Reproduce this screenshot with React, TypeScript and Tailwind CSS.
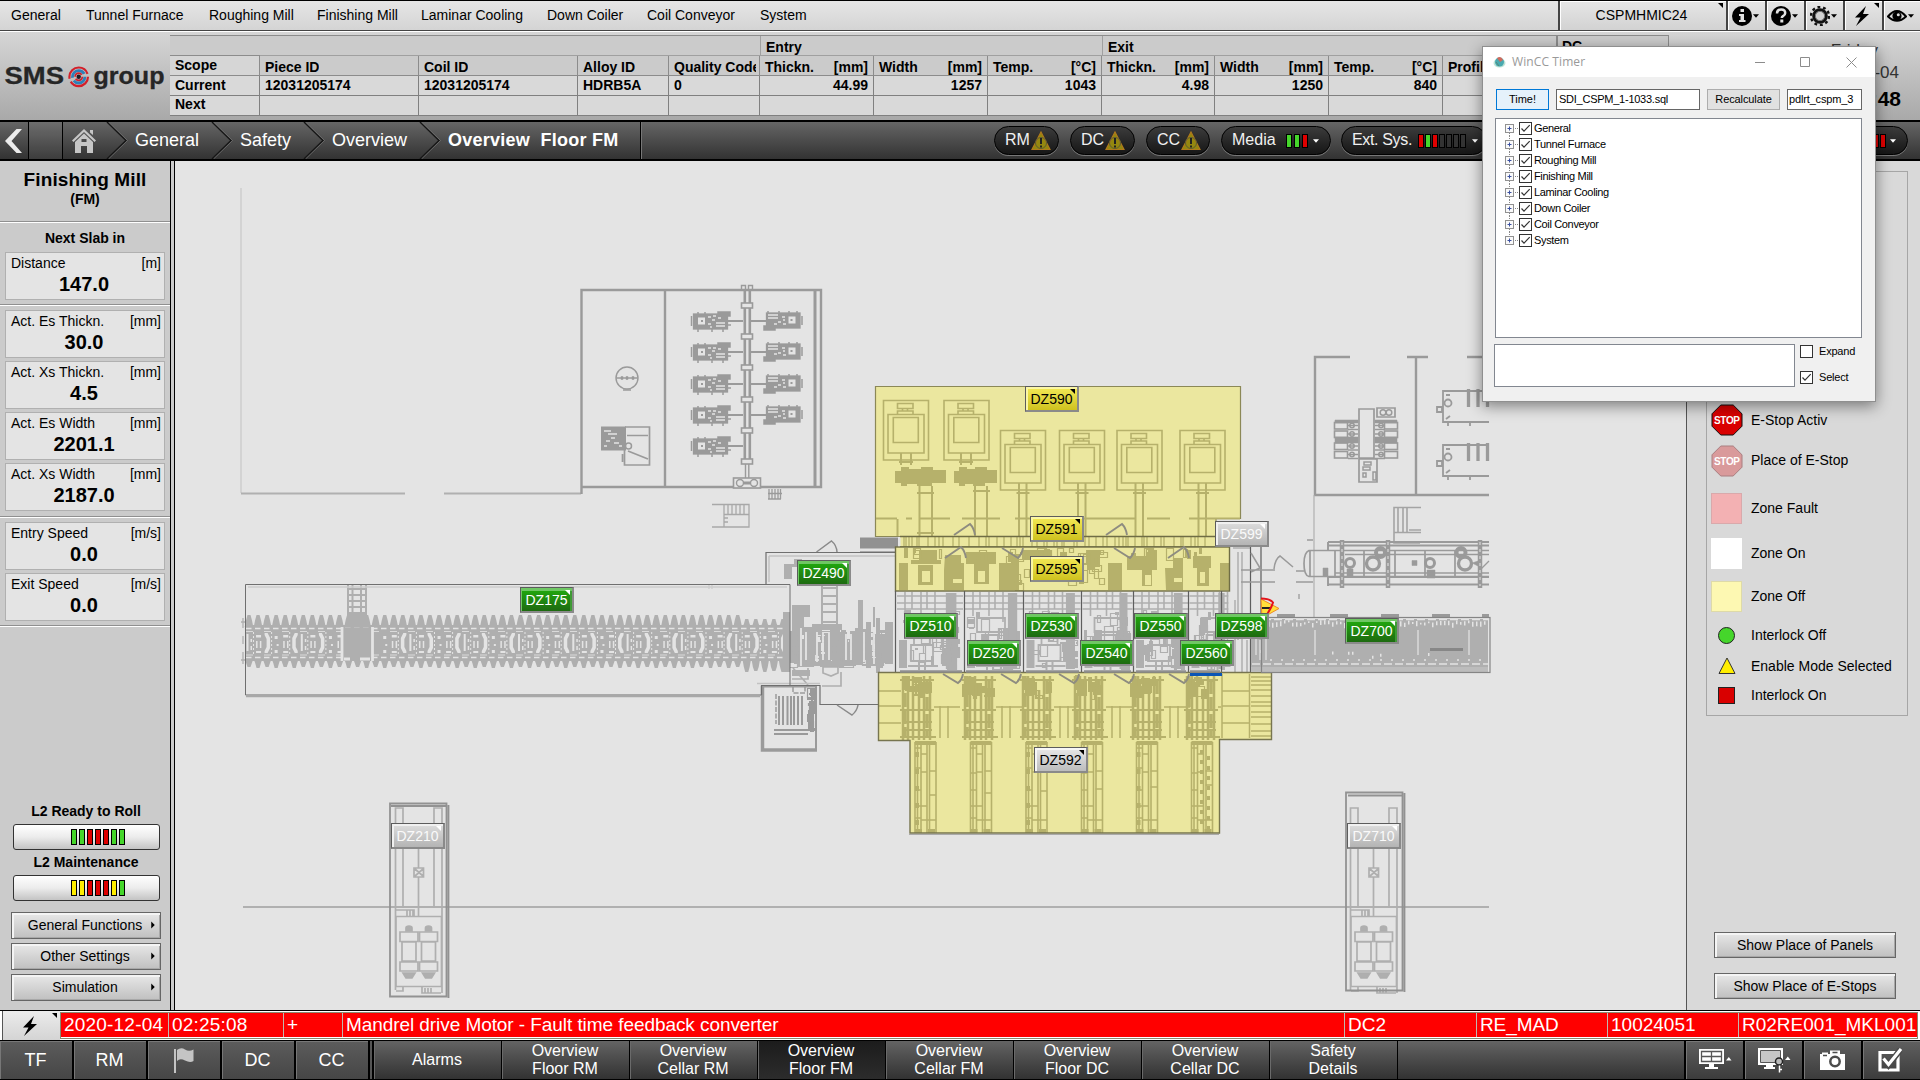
import React from "react";

/* ---------- drawing helpers ---------- */

function makeRng(seed: number) {
  let s = seed;
  return () => {
    s = (s * 16807) % 2147483647;
    return s / 2147483647;
  };
}

const box = (x: number, y: number, w: number, h: number) => `M${x} ${y}h${w}v${h}h${-w}z`;

type ClutterProps = {
  x: number; y: number; w: number; h: number; n: number; seed: number; color: string;
  max?: number; solid?: number; sw?: number;
};

/* Dense machine detail: small outlined and solid boxes inside a region. */
function Clutter({ x, y, w, h, n, seed, color, max = 12, solid = 0.4, sw = 1.2 }: ClutterProps) {
  const r = makeRng(seed * 7919 + 13);
  let open = "";
  let full = "";
  for (let i = 0; i < n; i++) {
    const bw = Math.min(w, 2 + Math.round(r() * max * 0.6));
    const bh = Math.min(h, 2 + Math.round(r() * max));
    const bx = x + Math.round(r() * (w - bw));
    const by = y + Math.round(r() * (h - bh));
    if (r() < solid) full += box(bx, by, bw, bh);
    else open += box(bx + 0.5, by + 0.5, bw, bh);
  }
  return (
    <g>
      <path d={full} fill={color} />
      <path d={open} fill="none" stroke={color} strokeWidth={sw} />
    </g>
  );
}

const G = "#9a9a9a";
const L = "#afafaf";
const BG = "#e4e4e4";
const YD = "#b6b16b";
const YL = "#ebe79f";

function Building() {
  const flanges = [303, 334, 365, 397, 428, 459];
  const left = [321, 352, 384, 415, 446];
  const right = [320, 351, 383, 414];
  return (
    <g fill="none" stroke={G}>
      <path d="M241 188V493" stroke="#c8c8c8" strokeWidth="1.2" />
      <path d="M241 493.5H405M444 493.5H581" stroke="#b0b0b0" strokeWidth="1.8" />
      <path d="M581.5 494V290H821V487H581.5M665 290V487" strokeWidth="2.400" />
      <path d="M815 290V487" strokeWidth="3" />
      <path d="M744.8 290V464M749.8 290V464" strokeWidth="2.6" />
      <path d="M745.5 464V480M748.8 464V480M741.5 290V285.500H745.500V290M748.500 290V285.500H752.500V290" strokeWidth="1.4" />
      {flanges.map((y) => (
        <rect key={y} x="741.5" y={y} width="11" height="5" fill={BG} strokeWidth="1.6" />
      ))}
      {left.map((y, i) => (
        <g key={y}>
          <path d={`M727 ${y}H743`} strokeWidth="2" />
          <rect x="693.500" y={y - 7} width="34" height="15" fill={G} strokeWidth="1.300" />
          <path d={`M718 ${y - 9}h12v4h-12zM691.500 ${y - 5}v10M698 ${y - 9}v3M705 ${y - 9}v3M698 ${y + 8}v3M712 ${y + 8}v3M723 ${y + 8}v3M727 ${y + 4}h4`} fill={G} strokeWidth="1.500" />
          <rect x="697.500" y={y - 4} width="8" height="8" fill={BG} strokeWidth="1" />
          <rect x="701" y={y - 1} width="2" height="2" fill={G} stroke="none" />
          <path d={`M708 ${y - 4}h3M712 ${y - 1}h3M708 ${y + 3}h3M716 ${y + 2}h9M716 ${y + 5}h9M718 ${y - 3}h3M711 ${y + 5}v2M713 ${y - 5 + i % 2}h3`} stroke={BG} strokeWidth="1.400" />
        </g>
      ))}
      {right.map((y, i) => (
        <g key={y}>
          <path d={`M751 ${y + 1}H767`} strokeWidth="2" />
          <rect x="766.500" y={y - 7} width="33.500" height="15" fill={G} strokeWidth="1.300" />
          <path d={`M764 ${y + 6}h11v4h-11zM802 ${y - 4}v9M768 ${y - 9}v3M779 ${y - 9}v3M789 ${y - 9}v3M797 ${y - 9}v3`} fill={G} strokeWidth="1.500" />
          <rect x="788" y={y - 4} width="8" height="8" fill={BG} strokeWidth="1" />
          <rect x="790.500" y={y - 1} width="2" height="2" fill={G} stroke="none" />
          <path d={`M768 ${y - 5}h10M768 ${y - 2}h10M778 ${y + 2}h3M783 ${y + 4}h3M782 ${y - 3}h3M774 ${y + 4 - i % 2}h3M783 ${y}h2`} stroke={BG} strokeWidth="1.400" />
        </g>
      ))}
      <circle cx="627" cy="378" r="11" strokeWidth="1.400" />
      <path d="M616 378H638M623 390h8" strokeWidth="1.600" />
      <path d="M621 376.500h2v3h-2zM626 376.500h2v3h-2zM632 376.500h2v3h-2z" fill={G} strokeWidth="0.500" />
      <rect x="601.500" y="427" width="24" height="23" fill={G} strokeWidth="1" />
      <path d="M604 431h7M608 434h9M606 441h4M614 443h5M604 446h3M611 438h4M619 446h3" stroke={BG} strokeWidth="1.700" />
      <path d="M625 427h24.500v38h-25v-15M627 435.500h21M628 451l20 8M622.500 454v8" strokeWidth="1.700" />
      <circle cx="628.500" cy="446" r="3" strokeWidth="1.500" />
      <rect x="733.500" y="478" width="27" height="10" fill={BG} strokeWidth="1.600" />
      <circle cx="740" cy="483" r="3.500" strokeWidth="1.400" />
      <circle cx="754" cy="483" r="3.500" strokeWidth="1.400" />
      <path d="M744 483h6" strokeWidth="3" />
      <path d="M769 489v10M772 489v10M775 489v10M778 489v10M780.500 489v10M768 493.500h14M768 499h13" strokeWidth="1.300" />
      <path d="M712 504.500H749V527H712M724 514.500H749M724 505V527M728 505V514M732 505V514M736 505V514M740 505V514M744 505V514M724 518h4M724 522h4" stroke="#a8a8a8" strokeWidth="1.300" />
    </g>
  );
}

function Conveyor() {
  let teeth = "";
  let holes = "";
  let dots = "";
  for (let i = 0; i < 60; i++) {
    const x = 245.5 + i * 9.05;
    const t = i > 54 ? 619 : 615;
    const b = i > 54 ? 671 : 667;
    teeth += `M${x - 0.8} 627L${x + 0.6} ${t + 5}L${x + 2} ${t}H${x + 5}L${x + 6.400} ${t + 5}L${x + 7.800} 627z`;
    teeth += `M${x - 0.8} 659L${x + 0.6} ${b - 4}L${x + 2} ${b + (i % 2)}H${x + 5}L${x + 6.400} ${b - 4}L${x + 7.800} 659z`;
    if (x > 338 && x < 374) continue;
    const k = i % 6;
    if (k === 0) holes += box(x + 1, 634, 2, 17) + box(x + 5, 639, 1.500, 3) + box(x + 5, 646, 1.500, 4);
    if (k === 1 || k === 4) holes += box(x + 1.5, 635, 5, 2.5) + box(x + 1.5, 641, 1.500, 7) + box(x + 5.3, 641, 1.500, 7) + box(x + 1.5, 651, 5, 2);
    if (k === 2) holes += `M${x + 1} 633h3l2.500 5v10l-2.500 5h-3v-2l2-4v-8l-2-4z`;
    if (k === 3) holes += box(x + 2, 636, 3, 3) + box(x + 4, 644, 2, 2) + box(x + 2, 650, 3, 3);
    if (k === 5) holes += `M${x + 7} 633h-3l-2.500 5v10l2.500 5h3v-2l-2-4v-8l2-4z`;
    if (i % 2 === 0) dots += `M${x + 8} 632V655`;
  }
  return (
    <g>
      <path d={teeth} fill={L} />
      <rect x="245" y="625" width="545" height="36" fill={L} />
      <path d={holes} fill={BG} />
      <path d={dots} stroke={BG} strokeWidth="1" strokeDasharray="2 2" />
      <path d="M246 628.500H790M246 657.500H790" stroke={BG} strokeWidth="1.500" strokeDasharray="5.500 3.500" />
      <path d="M246 631.500H790M246 655H790" stroke={BG} strokeWidth="0.800" strokeDasharray="7 11" />
      <path d="M243 618v10M243 636v8M243 652v12M241 622h5M241 660h5" stroke={L} strokeWidth="1.300" />
      <rect x="343" y="628" width="28" height="32" fill={L} />
      <path d="M342 627V661M372.500 627V661M344 659h6M360 659h10" stroke={BG} strokeWidth="2.800" />
      <path d="M348 585V626M352.500 585V626M361 585V626M366 585V626M348 589h18M348 595h18M348 601h18M348 607h18M348 613h18M348 619h18" stroke={L} strokeWidth="2" fill="none" />
      <rect x="349" y="614" width="17" height="12" fill={L} />
      <path d="M248 587H787M709 585v4M712 585v4" stroke="#cccccc" strokeWidth="1.300" fill="none" />
    </g>
  );
}

function RougherArea() {
  return (
    <g>
      <Clutter x={780} y={628} w={115} h={40} n={90} seed={4} color={L} max={22} solid={0.5} />
      <g fill={L}>
        <path d="M792 605h18v12h-6v10h18v8h-30zM792 670h18v6h-18zM783 612h7v60h-7zM858 600h5v30h-5zM873 607h2v20h-2z" />
        <path d="M784 564h10v-5h8v8h-10v12h-8zM812 624h30v6h-30zM812 661h30v5h-30z" />
        <path d="M855 628h7v36h-7zM866 622h5v46h-5zM876 618h4v55h-4zM885 622h8v42h-8z" />
      </g>
      <path d="M821 588h17M821 596h17M821 604h17M821 612h17M821 622h17M822 586V624M837 586V624" stroke={L} strokeWidth="2" />
      <path d="M823 667h15v6l-7 3l-8-3zM841 672V686H822M793 668l15 17M808 668V679H792" stroke={L} strokeWidth="1.700" fill="none" />
      <path d="M801 628V666M806 632V660M817 632V662M823 632V660M829 632V660M846 634V660M851 634V660M864 632V662M874 630V664" stroke={BG} strokeWidth="1.800" />
      <path d="M769 556H895M769 556V582M757 683.500H820" stroke="#c2c2c2" strokeWidth="1.500" fill="none" />
      <path d="M762.500 686V750H817" fill="none" stroke={G} strokeWidth="3.500" />
      <path d="M762 686.500H816V750" fill="none" stroke={G} strokeWidth="2" />
      <path d="M779 696V725M783 696V725M787.500 696V725M791 696V725M794 696V725M798 696V725M802 696V725" stroke={G} strokeWidth="2" />
      <path d="M774 730H808M774 734H808" stroke={G} strokeWidth="2" />
      <Clutter x={807} y={688} w={9} h={44} n={30} seed={9} color={G} solid={0.9} max={9} />
      <path d="M776 694v30M793 687v6h12v-6" stroke={G} strokeWidth="1.500" strokeDasharray="5 1.500" fill="none" />
      <g fill="none" stroke="#6f6f6f" strokeWidth="1.500">
        <path d="M245.500 584.500H790M790 584.500V685.500M761.500 695H245.500V584.500" strokeWidth="1" />
        <path d="M246 696.500H760" stroke="#a8a8a8" />
        <path d="M790 584.500H766V552.500H895.500M761.500 695V685.500H820V704.500H878" strokeWidth="1.200" />
        <path d="M816.500 552l15-11q5 4 5.500 11M837 705l15 10q5-4 6-10" stroke="#8a8a8a" />
      </g>
      <rect x="860" y="537.500" width="38" height="11" fill="#919191" />
      <path d="M860 551.500H895" stroke="#aaa" />
    </g>
  );
}

function MotorRoom() {
  const big = [883.5, 944];
  const small = [1000.5, 1059.5, 1117, 1180];
  const motor = (x: number, y: number) => (
    <path
      key={x}
      d={box(x, y, 45, 59.5) + box(x + 4.5, y + 14, 36, 38.5) + box(x + 9.800, y + 17, 25, 25) + box(x + 14, y + 3, 15.500, 5) + box(x + 14, y + 10.500, 15.500, 3.500) + `M${x + 19} ${y + 8}v3M${x + 24} ${y + 8}v3`}
    />
  );
  const ribs: number[] = [];
  const r = makeRng(77);
  for (let x = 904; x < 1214; x += 2 + Math.round(r() * 8)) ribs.push(x);
  return (
    <g>
      <path d="M875.500 386.500H1240.500V518.500H1216V536.500H875.500z" fill={YL} stroke="#8b8857" strokeWidth="1.200" />
      <path d="M876 518.500H897M906 518.500H912M920 518.500H950M962 518.500H1000M1015 518.500H1136M1147 518.500H1170M1189 518.500H1240M897.500 519V536" stroke={YD} strokeWidth="2" />
      <g fill="none" stroke={YD} strokeWidth="1.600">
        {big.map((x) => motor(x, 400.5))}
        {small.map((x) => motor(x, 430.5))}
        {small.map((x) => (
          <path key={x} d={`M${x + 18.500} 483V536M${x + 26} 483V536M${x + 16} 493h13`} strokeWidth="2" />
        ))}
        <path d="M901 453v12M911 453v12M899 462h14M961 453v12M971 453v12M959 462h14" strokeWidth="2" />
        <path d="M919.500 486V536M932 486V536M975 486V536M987 486V536M917 493h17M973 491h17M917 533h17" strokeWidth="2" />
      </g>
      <path d="M895 471h6v-4h8v2h12v-2h12v3h13v13h-14v3h-15v-2h-10v2h-6v-3h-6zM954 471h5v-4h8v2h8v-2h12v3h10v13h-12v3h-12v-2h-8v2h-6v-3h-5z" fill={YD} />
      <rect x="900.500" y="536.500" width="329" height="10.500" fill={YL} />
      <path d={ribs.map((x) => `M${x} 537V547`).join("")} stroke={YD} strokeWidth="1.300" />
      <path d="M900 536.500H1216M900 547H1230" stroke="#6f6d45" strokeWidth="1.300" />
      <rect x="895.500" y="547" width="334" height="44" fill={YL} />
      <g fill={YD}>
        <path d="M899 563h9v27h-9zM911 560h8v-10h18v10h4v4h-30zM918 565h15v20h-15zM945 555h16v8h3v27h-20v-20zM966 552h30v12h-30zM974 564h15v20h-15zM999 563h12v-8h8v35h-20z" />
        <path d="M1022 550h28v10h-28zM1086 550h14v17h-5v3h-8v-6zM1108 563h14v27h-14zM1127 556h30v14h-30zM1142 570h10v16h-10zM1165 568h8v-10h10v32h-17zM1193 556h18v12h-18zM1197 566h12v20h-12zM1220 563h9v27h-9z" />
      </g>
      <path d="M922 571h8v11h-8zM978 571h7v11h-7zM1145 575h6v10h-6zM1200 572h5v11h-5zM953 579h9v4h-9zM1174 578h8v4h-8z" fill={YL} />
      <Clutter x={1005} y={550} w={100} h={40} n={34} seed={12} color={YD} solid={0.1} />
      <Clutter x={897} y={548} w={330} h={12} n={30} seed={15} color={YD} solid={0.5} />
      <rect x="895.500" y="547" width="334" height="44" fill="none" stroke="#6f6d45" strokeWidth="1.400" />
      <g fill="none" stroke="#8e8c80" strokeWidth="1.900">
        <path d="M954 535l16-11q4 4 5 11M1106 535l16-11q4 4 5 11M945 558l16-11q4 4 5 11M1168 558l16-11q4 4 5 11M1002 548l16 10q4-4 5-10M1114 548l16 10q4-4 5-10" />
      </g>
    </g>
  );
}

function Stands() {
  const xs = [897, 965, 1024.5, 1082.5, 1134, 1189.5];
  const w = [66, 58, 56, 50, 54, 39];
  return (
    <g>
      {xs.map((x, i) => (
        <g key={x}>
          <path d={`M${x} 596h${w[i]}M${x} 603h${w[i]}M${x} 609h${w[i]}M${x + 8} 592v24M${x + 15} 592v17M${x + 24} 592v24M${x + 30} 592v17M${x + 38} 592v30`} stroke={L} strokeWidth="1.600" fill="none" />
          <rect x={x + w[i] * 0.74} y={593} width={w[i] * 0.16} height={76} fill={L} />
          <rect x={x + 2} y={640} width={8} height={28} fill={L} />
          <path d={box(x + 14, 645, 22, 16) + box(x + 17, 635, 16, 10) + box(x + 12, 618, 28, 14)} stroke={L} strokeWidth="1.800" fill="none" />
          <path d={`M${x + 22} 660v10M${x + 28} 660v10M${x + 11} 666h30`} stroke={L} strokeWidth="2" />
          <Clutter x={Math.round(x)} y={610} w={w[i] - 1} h={60} n={22} seed={31 + i} color={L} solid={0.4} max={12} />
          <Clutter x={Math.round(x + w[i] * 0.64)} y={626} w={Math.round(w[i] * 0.34)} h={44} n={24} seed={61 + i} color={L} solid={0.7} />
        </g>
      ))}
      <path d="M1238 552V640M1242 552V640M1233 548H1250M1235 600V672M1242 640V672M1247 640V672" stroke={L} strokeWidth="1.500" fill="none" />
      <path d="M895.500 591V672M964.500 591V672M1023.500 591V672M1081.500 591V672M1133.500 591V672M1188.500 591V672M1221.500 591V672M1250.500 547V672M1261 547V617M1250.500 672.500H1271" stroke="#5e5e5e" strokeWidth="1.200" />
      <path d="M1251 553l9 15l-9 4M1274 569q1-10 6-13l13 11M1241 570h34M1241 582h34" stroke="#9a9a9a" strokeWidth="1.500" fill="none" />
    </g>
  );
}

function Cellar() {
  const cols = [915, 970.5, 1026, 1081.5, 1136.5, 1191.5];
  const ups = [900, 962, 1020, 1072, 1130, 1184];
  return (
    <g>
      <path d="M878.500 672.500H1271.500V739.500H1219.500V833H910V740.500H878.500z" fill={YL} />
      {cols.map((x, i) => (
        <g key={x}>
          <path d={`M${x} 742V833M${x + 2.5} 742V833M${x + 6} 742V833M${x + 12} 742V833M${x + 14.500} 742V833M${x + 21} 742V833`} stroke={YD} strokeWidth="1.600" />
          <path d={`M${x} ${748}h6M${x} ${768 + (i % 2) * 5}h6M${x} ${790}h6M${x} ${806}h12M${x + 6} ${754}h6M${x + 6} ${772}h6M${x + 14} ${771}h7M${x + 14} ${795 - i * 2}h7M${x + 6} ${820}h15M${x} ${818}h6`} stroke={YD} strokeWidth="1.500" />
          <path d={box(x, 741, 21, 4) + box(x, 829, 7, 4) + box(x + 13, 829, 7, 4)} fill={YD} />
          {i % 2 === 0 && <path d={`M${x + 2} 752v76`} stroke={YD} strokeWidth="4" strokeDasharray="5 12" />}
          {i === 5 && <path d={`M${x + 10} 750v76M${x + 17} 756v76`} stroke={YD} strokeWidth="3" strokeDasharray="4 6" />}
        </g>
      ))}
      {ups.map((x, i) => (
        <g key={x}>
          <path d={`M${x + 3} 676V740M${x + 8} 676V740M${x + 13} 676V740M${x + 19} 690V740M${x + 24} 676V740M${x + 30} 676V740`} stroke={YD} strokeWidth="2.500" />
          <path d={`M${x + 5} 676V736M${x + 27} 680V736`} stroke={YD} strokeWidth="3.500" strokeDasharray="14 3" />
          <path d={`M${x} 680h34M${x} 710h34M${x + 2} 722h30M${x + 2} 730h30M${x} 737h36`} stroke={YD} strokeWidth="2" />
          <path d={`M${x + 40} 706V738M${x + 48} 706V738M${x + 34} 707H${Math.min(x + 60, 1221)}`} stroke={YD} strokeWidth="1.500" />
          <Clutter x={x} y={675} w={34} h={24} n={10} seed={91 + i} color={YD} max={14} solid={0.7} />
        </g>
      ))}
      <rect x="1222" y="676" width="28" height="62" fill={YL} />
      <path d="M879 691H901M879 706H901M879 723H901M1222 691H1250M1222 706H1250M1222 723H1250M1222 674V738M1249.500 674V738" stroke={YD} strokeWidth="1.500" />
      <path d="M1251 677h20M1251 681h20M1251 685h20M1251 690h20M1251 696h20M1251 702h20M1251 706h20M1251 712h20M1251 717h20M1251 724h20M1251 731h20M1251 736h20" stroke={YD} strokeWidth="1.600" />
      <path d="M878.500 672.500H1271.500V739.500H1219.500V833H910V740.500H878.500z" fill="none" stroke="#77754f" strokeWidth="1.400" />
      <path d="M909 834.500H1219" stroke="#aaa" />
      <path d="M900 671.500H962M966 671.500H1021M1026 671.500H1079M1084 671.500H1131M1136 671.500H1186M1190 671.500H1220" stroke="#8f8f8f" strokeWidth="2.500" />
      <path d="M943 674l15 9q4-3 5-9M1001 674l15 9q4-3 5-9M1059 674l15 9q4-3 5-9M1114 674l15 9q4-3 5-9M1169 674l15 9q4-3 5-9" fill="none" stroke="#8e8c80" strokeWidth="1.900" />
      <rect x="1190" y="673" width="32" height="3" fill="#0b55b5" />
    </g>
  );
}

function RightRooms() {
  const rowsY = [425.5, 434, 446, 454.5];
  const r = makeRng(505);
  let specks = "";
  for (let x = 1252; x < 1488; x += 4) {
    specks += box(x, 620 + r() * 3, 1.500, 1.500 + r() * 4);
    if (r() < 0.2) specks += box(x, 650 + r() * 6, 1.500, 3);
  }
  return (
    <g fill="none" stroke={G}>
      <path d="M1350 357H1315V495M1407 357H1428M1416 357V495M1467 357H1489" strokeWidth="2.400" />
      <path d="M1314 495H1489" strokeWidth="2.700" />
      <path d="M1314 495V617" stroke="#b0b0b0" strokeWidth="1.200" />
      <path d={box(1359, 409, 15, 49) + box(1359, 459, 18, 23) + box(1377, 408, 18, 9)} strokeWidth="1.700" />
      <circle cx="1383" cy="412.500" r="2.800" strokeWidth="1.500" />
      <circle cx="1389" cy="412.500" r="2.800" strokeWidth="1.500" />
      <path d="M1335 437h23v6h-23zM1375 437h22v6h-22zM1335 420h23v3h-23zM1375 420h22v3h-22z" fill={G} strokeWidth="0.500" />
      {rowsY.map((y) => (
        <g key={y} strokeWidth="1.600">
          <rect x="1334.500" y={y - 3} width="13" height="6.500" />
          <rect x="1384.500" y={y - 3} width="13" height="6.500" />
          <path d={`M1347 ${y}h11M1375 ${y}h10M1348 ${y + 4}h10M1375 ${y + 4}h10`} />
          <circle cx="1352" cy={y} r="2.200" />
          <circle cx="1381" cy={y} r="2.200" />
        </g>
      ))}
      <path d={box(1364, 462, 7, 3) + box(1363, 467, 7, 3) + box(1363, 473, 3, 4) + box(1373, 472, 3, 8)} strokeWidth="1.500" />
      {[391, 445].map((y) => (
        <g key={y} strokeWidth="1.800">
          <path d={`M1489 ${y}H1443V${y + 31}H1489M1437 ${y + 16}h5v5h-5zM1448 ${y + 31}v4M1470 ${y + 31}v4`} />
          <circle cx="1448" cy={y + 12} r="3.500" />
          <path d={`M1468.500 ${y - 2}v18M1478 ${y - 2}v18M1487.500 ${y - 2}v18`} strokeWidth="3.300" />
          <path d={`M1446 ${y + 4}h4M1446 ${y + 28}l4-3`} />
        </g>
      ))}
      <path d="M1421 507.500H1394V543H1420M1398 508V532M1403 508V532M1407 508V532M1394 532.500H1421M1409 530h12" stroke="#a4a4a4" strokeWidth="1.600" />
      <path d="M1328 542H1489M1328 545.500H1489M1328 577H1489M1328 584.500H1489M1328 542V550M1328 577V586" strokeWidth="1.900" />
      <path d="M1489 550.500H1309q-5 2-5 13q0 12 5 13H1489M1310 551V576M1335 551V576M1364 551V576M1395 551V576M1425 551V576M1455 551V576M1335 573H1489M1345 554.500H1489" strokeWidth="1.700" />
      <path d="M1342 540V588M1388 540V588M1480 540V588" strokeWidth="4.500" />
      <path d="M1342 542V586M1388 542V586M1480 542V586" stroke={BG} strokeWidth="1" strokeDasharray="3 4" />
      <circle cx="1350" cy="563" r="4.500" strokeWidth="3" />
      <circle cx="1373" cy="563.500" r="6.500" strokeWidth="3.300" />
      <circle cx="1380.500" cy="552.500" r="4.500" strokeWidth="4" />
      <circle cx="1430" cy="563" r="4.500" strokeWidth="3" />
      <circle cx="1465" cy="563.500" r="6.500" strokeWidth="3.300" />
      <circle cx="1461" cy="552.500" r="4.500" strokeWidth="4" />
      <path d="M1412 560.500h5v5h-5zM1323 568h5v8h-5zM1347 569h6v8h-6zM1427 570h8v8h-8zM1472 563l6-2v5z" fill={G} strokeWidth="0.500" />
      <path d="M1296 571H1304M1296 582H1313M1299 594v5M1307 540h6M1481 569l8-8" strokeWidth="1.300" />
      {/* run-out table */}
      <rect x="1251" y="619" width="237" height="53" fill={L} stroke="none" />
      <path d="M1277 614h18v4h-18zM1330 614h18v4h-18zM1381 614h18v4h-18zM1432 614h18v4h-18zM1482 614h7v4h-7z" fill={G} stroke="none" />
      <path d={specks} fill={BG} stroke="none" />
      <path d="M1252 619.500H1488M1252 664H1488" stroke={BG} strokeWidth="1.600" strokeDasharray="8 3" />
      <path d="M1315 630V655M1418 630V655M1469 630V655M1256 630V655M1266 620V660M1260 640V660" stroke="#dadada" strokeWidth="1.500" />
      <path d="M1270 660H1488" stroke={BG} strokeWidth="1.600" strokeDasharray="2 9" />
      <rect x="1251" y="667" width="237" height="5" fill="#bcbcbc" stroke="none" />
      <rect x="1261.500" y="617.500" width="228.500" height="55" stroke="#858585" strokeWidth="1.200" />
      <path d="M1430 649.500H1463" stroke="#878787" strokeWidth="2.800" />
      {/* forklift marker */}
      <path d="M1261 599L1279 608.500L1262 618z" fill="#ffe03a" stroke="#f08a24" strokeWidth="1" />
      <path d="M1262 608h9" stroke="#222" strokeWidth="2" />
      <path d="M1261 598.500q9 0 12 4q-1 4-6 12" stroke="#e3131b" strokeWidth="2" />
    </g>
  );
}

function Bay({ dx }: { dx: number }) {
  return (
    <g transform={`translate(${dx} 0)`} fill="none" stroke={L} strokeWidth="1.700">
      <path d="M395.500 990V808H403V908M434 908V808H442V993M418.500 848V868M418.500 877V916M396 910H414V916M396 916.500H441.500V986.500H396zM396 991H403V987M422 987V993H441M407 910v6M410 910v6M413 910v6M425 988v5M428 988v5M431 988v5" />
      <path d={box(414, 868, 9.500, 9) + "M415 869l8 7M423 869l-8 7"} />
      {[409, 428.500].map((c) => (
        <g key={c}>
          <path d={`M${c - 3} 931v-3q0-2 3-2q3 0 3 2v3zM${c - 6} 973h12l-3 5h-6z`} fill={L} />
          <path d={box(c - 9, 932, 18, 9.500) + box(c - 7, 942, 14, 19) + box(c - 9, 962, 18, 9)} fill={BG} />
        </g>
      ))}
    </g>
  );
}

function PlantDrawing() {
  return (
    <svg className="absolute left-0 top-0 h-[849px] w-[1511px]" viewBox="175 161 1511 849">
      <Building />
      <path d="M243 907H1489" stroke="#b0b0b0" strokeWidth="2" />
      <Bay dx={0} />
      <Bay dx={955} />
      <path d="M390 803.500H446.500V996.500H390zM448.500 805V998M391 806H447" fill="none" stroke="#929292" strokeWidth="1.800" />
      <path d="M1346 792.500H1402.500V990.500H1346zM1348 795.500H1402M1404.500 793V992" fill="none" stroke="#929292" strokeWidth="1.800" />
      <Conveyor />
      <RougherArea />
      <MotorRoom />
      <Stands />
      <Cellar />
      <RightRooms />
    </svg>
  );
}

/* ---------- zone labels ---------- */

type Zone = { id: string; kind: "green" | "yellow" | "gray" | "off"; pos: string };

const zones: Zone[] = [
  { id: "DZ590", kind: "yellow", pos: "left-[850px] top-[225px]" },
  { id: "DZ591", kind: "yellow", pos: "left-[855px] top-[355px]" },
  { id: "DZ595", kind: "yellow", pos: "left-[855px] top-[395px]" },
  { id: "DZ599", kind: "off", pos: "left-[1040px] top-[360px]" },
  { id: "DZ175", kind: "green", pos: "left-[345px] top-[426px]" },
  { id: "DZ490", kind: "green", pos: "left-[622px] top-[399px]" },
  { id: "DZ510", kind: "green", pos: "left-[729px] top-[452px]" },
  { id: "DZ520", kind: "green", pos: "left-[792px] top-[479px]" },
  { id: "DZ530", kind: "green", pos: "left-[850px] top-[452px]" },
  { id: "DZ540", kind: "green", pos: "left-[905px] top-[479px]" },
  { id: "DZ550", kind: "green", pos: "left-[959px] top-[452px]" },
  { id: "DZ560", kind: "green", pos: "left-[1005px] top-[479px]" },
  { id: "DZ598", kind: "green", pos: "left-[1040px] top-[452px]" },
  { id: "DZ700", kind: "green", pos: "left-[1170px] top-[457px]" },
  { id: "DZ592", kind: "gray", pos: "left-[859px] top-[586px]" },
  { id: "DZ210", kind: "off", pos: "left-[216px] top-[662px]" },
  { id: "DZ710", kind: "off", pos: "left-[1172px] top-[662px]" },
];

const zoneLook = {
  green: "text-white from-[#1fae0b] to-[#1d6a10] shadow-[inset_1px_3px_0_#6fc764,inset_-2px_0_0_#3f9a35] [&_path]:fill-white",
  yellow: "text-black from-[#f4ea55] to-[#cfc21c] shadow-[inset_2px_2px_0_#fbf6a4]",
  gray: "text-black from-[#e9e9e9] to-[#bcbcbc] shadow-[inset_2px_2px_0_#f6f6f6]",
  off: "text-[#fafafa] from-[#dedede] to-[#b4b4b4] shadow-[inset_2px_2px_0_#f0f0f0] [&_path]:fill-white",
};

function ZoneLabel({ z }: { z: Zone }) {
  return (
    <div className={`absolute flex h-[26px] w-[54px] items-center justify-center border border-[#5c5c5c] border-r-2 border-b-2 border-r-[#8a8a8a] border-b-[#8a8a8a] bg-linear-to-b text-[14px] leading-none ${zoneLook[z.kind]} ${z.pos}`}>
      <span>{z.id}</span>
      <svg className="absolute right-0.5 top-0.5 size-[5px]" viewBox="0 0 5 5"><path d="M0 0H5V5z" /></svg>
    </div>
  );
}

/* ---------- header ---------- */

const Corner = () => (
  <svg className="absolute right-[3px] top-[2px] size-[5px]" viewBox="0 0 5 5"><path d="M0 0H5V5z" /></svg>
);
const Down = ({ className = "fill-black" }: { className?: string }) => (
  <svg className={`h-[4px] w-[6px] shrink-0 ${className}`} viewBox="0 0 7 4"><path d="M0 0H7L3.500 4z" /></svg>
);
const Bolt = ({ className = "size-5" }: { className?: string }) => (
  <svg className={className} viewBox="0 0 20 20"><path d="M14 0L3 11.500H8.500L4 20L17 8H11z" fill="#000" /></svg>
);

function MenuBar() {
  const cell = "relative flex h-[29px] items-center justify-center border-l-2 border-[#444] shadow-[inset_1px_1px_0_#fff] bg-linear-to-b from-[#e6e6e6] to-[#d2d2d2] gap-px pr-[3px]";
  return (
    <div className="flex h-[31px] border-t border-b border-t-black border-b-[#444] bg-linear-to-b from-[#e6e6e6] to-[#d4d4d4] text-[14px]">
      <div className="flex flex-1 items-center pb-[2px] pl-[11px] leading-none">
        <span className="w-[75px]">General</span>
        <span className="w-[123px]">Tunnel Furnace</span>
        <span className="w-[108px]">Roughing Mill</span>
        <span className="w-[104px]">Finishing Mill</span>
        <span className="w-[126px]">Laminar Cooling</span>
        <span className="w-[100px]">Down Coiler</span>
        <span className="w-[113px]">Coil Conveyor</span>
        <span>System</span>
      </div>
      <div className={`${cell} w-[168px]`}><span className="pb-px">CSPMHMIC24</span><Corner /></div>
      <div className={`${cell} w-[39px]`}>
        <svg className="size-5" viewBox="0 0 20 20"><circle cx="10" cy="10" r="10" /><path d="M8.500 3h3.500v3H8.500zM7 8h5v6h1.500v2H7v-2h1.500v-4H7z" fill="#e2e2e2" /></svg>
        <Down />
      </div>
      <div className={`${cell} w-[39px]`}>
        <svg className="size-5" viewBox="0 0 20 20"><circle cx="10" cy="10" r="10" /><path d="M6 7.500q0-4 4.200-4q4 0 4 3.500q0 2-2.200 3.200q-1.200.7-1.200 1.800" fill="none" stroke="#e2e2e2" strokeWidth="2.500" /><rect x="9.300" y="13.500" width="3" height="3" fill="#e2e2e2" /></svg>
        <Down />
      </div>
      <div className={`${cell} w-[39px]`}>
        <svg className="size-5" viewBox="0 0 20 20">
          <circle cx="10" cy="10" r="9" fill="none" stroke="#111" strokeWidth="2.400" strokeDasharray="2.830 2.830" />
          <circle cx="10" cy="10" r="6.300" fill="#d2d2d2" stroke="#111" strokeWidth="3" />
          <circle cx="10" cy="10" r="4.600" fill="none" stroke="#777" />
        </svg>
        <Down />
      </div>
      <div className={`${cell} w-[39px]`}><Bolt /><Corner /></div>
      <div className={`${cell} w-[38px]`}>
        <svg className="h-[14px] w-5" viewBox="0 0 20 14"><path d="M1 7.500Q10-3.500 19 7.500Q10 16 1 7.500z" fill="none" stroke="#000" strokeWidth="2" /><circle cx="10" cy="7" r="4.600" /><circle cx="11.300" cy="5.700" r="1.500" fill="#ddd" /></svg>
        <Down />
      </div>
    </div>
  );
}

function Logo() {
  return (
    <svg className="h-[89px] w-[170px] shrink-0" viewBox="0 31 170 89">
      <g fontFamily="Liberation Sans, sans-serif" fontWeight="bold" fill="#262626" stroke="#262626" strokeWidth="0.300">
        <text x="4.500" y="83" fontSize="23" textLength="59.500" lengthAdjust="spacingAndGlyphs">SMS</text>
        <text x="93.500" y="83" fontSize="23.500" textLength="71" lengthAdjust="spacingAndGlyphs">group</text>
      </g>
      <g fill="none">
        <circle cx="78.700" cy="75.800" r="9.300" stroke="#d3202a" strokeWidth="2.200" strokeDasharray="24 3 28 3.500" />
        <circle cx="78.700" cy="75.800" r="6.200" stroke="#2f7fb8" strokeWidth="2.800" strokeDasharray="15 3 17 4" />
        <circle cx="78.700" cy="75.800" r="3.600" stroke="#d3202a" strokeWidth="1.800" strokeDasharray="9 2" />
        <circle cx="78.700" cy="75.800" r="2.200" fill="#1d1d28" />
      </g>
    </svg>
  );
}

const measure = [
  ["Thickn.", "[mm]", "44.99", "w-[114px]"],
  ["Width", "[mm]", "1257", "w-[114px]"],
  ["Temp.", "[°C]", "1043", "w-[114px]"],
  ["Thickn.", "[mm]", "4.98", "w-[113px]"],
  ["Width", "[mm]", "1250", "w-[114px]"],
  ["Temp.", "[°C]", "840", "w-[114px]"],
];
const ids = [
  ["Piece ID", "12031205174", "w-[159px]"],
  ["Coil ID", "12031205174", "w-[159px]"],
  ["Alloy ID", "HDRB5A", "w-[91px]"],
  ["Quality Code", "0", "w-[91px]"],
];

function HeaderTable() {
  const head = "flex h-5 items-center border-b border-r border-[#8c8c8c] bg-[#cbcbcb] px-[5px] pt-[2px]";
  const row = "flex h-5 items-center border-b border-r border-[#808080] bg-[#d9d9d9] px-[5px] pb-[2px]";
  const last = "h-[20px] border-b border-r border-[#808080] bg-[#d9d9d9] px-[5px] leading-[17px]";
  return (
    <div className="mt-[3px] flex h-[80px] shrink-0 border-t border-[#8c8c8c] text-[14px] font-bold leading-none">
      <div className="w-[90px]">
        <div className="h-5 border-b border-[#8c8c8c] bg-[#cbcbcb]" />
        <div className="flex h-5 items-center border-b border-r border-[#8c8c8c] bg-[#d6d6d6] px-[5px] pb-px">Scope</div>
        <div className={row}>Current</div>
        <div className={last}>Next</div>
      </div>
      {ids.map(([h, v, w]) => (
        <div key={h} className={`${w} shrink-0`}>
          <div className="h-5 border-b border-[#a0a0a0] bg-[#cbcbcb]" />
          <div className={`${head} pr-0`}><span className="overflow-hidden whitespace-nowrap py-[3px] max-w-[82px]">{h}</span></div>
          <div className={row}>{v}</div>
          <div className={last} />
        </div>
      ))}
      {[0, 3].map((s) => (
        <div key={s} className="shrink-0">
          <div className="flex h-5 items-center border-b border-l border-[#a0a0a0] bg-[#cbcbcb] pl-[5px] pt-[3px]">{s ? "Exit" : "Entry"}</div>
          <div className="flex">
            {measure.slice(s, s + 3).map(([h, u, v, w]) => (
              <div key={h} className={w}>
                <div className={`${head} justify-between`}><span>{h}</span><span>{u}</span></div>
                <div className={`${row} justify-end`}>{v}</div>
                <div className={last} />
              </div>
            ))}
          </div>
        </div>
      ))}
      <div className="w-[113px] shrink-0">
        <div className="h-5 border-b border-[#a0a0a0] bg-[#cbcbcb]" />
        <div className={head}>Profil</div>
        <div className={row} />
        <div className={last} />
      </div>
      <div className="w-[113px] shrink-0">
        <div className="flex h-5 items-center border-b border-l-2 border-r border-[#8c8c8c] bg-[#cbcbcb] pl-[4px] pt-px">DC</div>
        <div className={head} />
        <div className={row} />
        <div className={last} />
      </div>
    </div>
  );
}

const Bar = ({ c }: { c: string }) => <span className={`h-[14px] w-[6px] shrink-0 border border-black ${c}`} />;

function Pill({ label, w, children }: { label: string; w: string; children: React.ReactNode }) {
  return (
    <div className={`flex h-[29px] items-center rounded-full border border-black bg-linear-to-b from-[#3c3c3c] to-[#161616] pl-[10px] text-[16px] text-[#f0f0f0] shadow-[0_1px_0_#777] ${w}`}>
      <span className="whitespace-nowrap pb-px">{label}</span>
      {children}
    </div>
  );
}

const Warn = () => (
  <svg className="ml-[1px] h-[20px] w-[20px]" viewBox="0 0 20 20">
    <path d="M10 1L19 18.500H1z" fill="#94880f" stroke="#b07a1c" strokeWidth="1.200" />
    <circle cx="10" cy="12" r="5.500" fill="none" stroke="#5d5a33" />
    <path d="M10 7v6M10 14.500v2" stroke="#222" strokeWidth="2" />
  </svg>
);

const Chevron = () => (
  <svg className="h-[37px] w-[22px] shrink-0" viewBox="0 0 22 37">
    <path d="M1 0L20 18.500L1 37" fill="none" stroke="#151515" strokeWidth="1.500" />
    <path d="M2.500 0L21.500 18.500L2.500 37" fill="none" stroke="#747474" strokeWidth="0.800" />
  </svg>
);

function NavBar() {
  return (
    <div className="flex h-[41px] items-center border-y-2 border-t-black border-b-black bg-linear-to-b from-[#666] to-[#333] text-[18px] text-white">
      <div className="flex h-full w-[29px] items-center border-r border-black pl-1">
        <svg className="h-[26px] w-[20px]" viewBox="0 0 20 26"><path d="M18 1L12.500 1L1 13L12.500 25H18L7.500 13z" fill="#ececec" /></svg>
      </div>
      <div className="h-full w-[34px] border-r border-black bg-white/5" />
      <div className="flex h-full w-[43px] items-center justify-center pr-px">
        <svg className="h-[25px] w-[26px]" viewBox="0 0 26 25">
          <path d="M13 1L25 12.500L23.500 14L13 4L2.500 14L1 12.500z" fill="#c6c6c6" /><path d="M19 2h3v5l-3-2.500z" fill="#c6c6c6" />
          <path d="M13 5.500L22 14V25H16V18H10V25H4V14z" fill="#c6c6c6" /><path d="M10.500 11h5v3h-5z" fill="#4a4a4a" />
        </svg>
      </div>
      <Chevron />
      <span className="ml-[7px] w-[76px]">General</span>
      <Chevron />
      <span className="ml-[7px] w-[63px]">Safety</span>
      <Chevron />
      <span className="ml-[7px] w-[87px]">Overview</span>
      <Chevron />
      <span className="ml-[7px] w-[192px] whitespace-pre font-bold tracking-[0.250px]">Overview  Floor FM</span>
      <div className="h-full w-[2px] border-l border-black bg-[#777]" />
      <div className="ml-[352px] flex gap-[11px]">
        <Pill label="RM" w="w-[65px]"><Warn /></Pill>
        <Pill label="DC" w="w-[65px]"><Warn /></Pill>
        <Pill label="CC" w="w-[64px]"><Warn /></Pill>
        <Pill label="Media" w="w-[110px]">
          <span className="ml-[10px] mr-[5px] flex gap-[2px]"><Bar c="bg-[#45d62b]" /><Bar c="bg-[#45d62b]" /><Bar c="bg-[#e00000]" /></span>
          <Down className="fill-white" />
        </Pill>
        <Pill label="Ext. Sys." w="w-[146px] -ml-px tracking-[-0.350px]">
          <span className="ml-[6px] mr-[6px] flex gap-px">
            <Bar c="bg-[#e00000]" /><Bar c="bg-[#45d62b]" /><Bar c="bg-[#e00000]" /><Bar c="bg-[#333]" /><Bar c="bg-[#333]" /><Bar c="bg-[#333]" /><Bar c="bg-[#333]" />
          </span>
          <Down className="fill-white" />
        </Pill>
      </div>
      <div className="ml-auto mr-[12px] flex h-[29px] w-[100px] items-center justify-end rounded-full border border-black bg-linear-to-b from-[#3c3c3c] to-[#161616] pr-[11px] shadow-[0_1px_0_#777]">
        <span className="mr-1 flex gap-px"><Bar c="bg-[#e00000]" /><Bar c="bg-[#e00000]" /></span>
        <Down className="fill-white" />
      </div>
    </div>
  );
}

/* ---------- left panel ---------- */

function Value({ label, unit, value }: { label: string; unit: string; value: string }) {
  return (
    <div className="mx-[5px] h-[48px] border border-[#b0b0b0] bg-[#e4e4e4] pl-[5px] pr-[3px] pt-[2px]">
      <div className="flex justify-between text-[14px] leading-[16px]"><span>{label}</span><span>{unit}</span></div>
      <div className="pr-[4px] text-center text-[20px] font-bold leading-[26px]">{value}</div>
    </div>
  );
}

const Rule = () => <div className="h-[2px] shrink-0 border-t border-[#909090] bg-white" />;

const lamp: Record<string, string> = { g: "bg-[#45d62b]", r: "bg-[#dd0000]", y: "bg-[#ffee00]" };

function Lamps({ pattern }: { pattern: string }) {
  return (
    <div className="mx-auto flex h-[26px] w-[147px] items-center justify-center gap-[2px] rounded-[3px] border border-[#333] bg-linear-to-b from-white via-[#ececec] to-[#c4c4c4] pl-[23px]">
      {pattern.split("").map((c, i) => (
        <span key={i} className={`h-[16px] w-[6px] border border-black ${lamp[c]}`} />
      ))}
    </div>
  );
}

const buttonLook = "border border-[#666] bg-linear-to-b from-[#e8e8e8] to-[#c0c0c0] shadow-[inset_2px_2px_0_#f4f4f4,inset_-1px_-1px_0_#a8a8a8] text-[14px]";

function SideButton({ label }: { label: string }) {
  return (
    <div className={`relative mx-auto flex h-[27px] w-[150px] items-center justify-center pb-px pr-[2px] ${buttonLook}`}>
      {label}
      <svg className="absolute right-[5px] top-[8px] h-[8px] w-[4px]" viewBox="0 0 4 9"><path d="M0 0.500V8.500L4 4.500z" /></svg>
    </div>
  );
}

function LeftPanel() {
  return (
    <div className="flex w-[170px] shrink-0 flex-col bg-[#cbcbcb]">
      <div className="h-[60px] pt-[7px] text-center font-bold">
        <div className="text-[19px] leading-[23px] tracking-[0.1px]">Finishing Mill</div>
        <div className="text-[14px] leading-[17px]">(FM)</div>
      </div>
      <Rule />
      <div className="flex h-[29px] items-center justify-center pt-[2px] text-[14px] font-bold">Next Slab in</div>
      <Value label="Distance" unit="[m]" value="147.0" />
      <div className="h-[4px]" />
      <Rule />
      <div className="flex flex-col gap-[3px] pb-[5px] pt-[4px]">
        <Value label="Act. Es Thickn." unit="[mm]" value="30.0" />
        <Value label="Act. Xs Thickn." unit="[mm]" value="4.5" />
        <Value label="Act. Es Width" unit="[mm]" value="2201.1" />
        <Value label="Act. Xs Width" unit="[mm]" value="2187.0" />
      </div>
      <Rule />
      <div className="flex flex-col gap-[3px] pb-[4px] pt-[4px]">
        <Value label="Entry Speed" unit="[m/s]" value="0.0" />
        <Value label="Exit Speed" unit="[m/s]" value="0.0" />
      </div>
      <Rule />
      <div className="mt-auto flex flex-col pb-[9px] pl-[2px] text-center text-[14px] font-bold">
        <div className="h-[23px]">L2 Ready to Roll</div>
        <Lamps pattern="ggrrrgg" />
        <div className="mt-[2px] h-[23px]">L2 Maintenance</div>
        <Lamps pattern="yyrrryg" />
        <div className="mt-[11px] flex flex-col gap-[4px] font-normal">
          <SideButton label="General Functions" />
          <SideButton label="Other Settings" />
          <SideButton label="Simulation" />
        </div>
      </div>
    </div>
  );
}

/* ---------- right legend ---------- */

const Stop = ({ faded = false }: { faded?: boolean }) => (
  <svg className="size-[32px]" viewBox="0 0 32 32">
    <path d="M9.800 1H22.200L31 9.800V22.200L22.200 31H9.800L1 22.200V9.800z" fill={faded ? "#d99a9b" : "#d90000"} stroke={faded ? "#a97e80" : "#111"} />
    <text x="16" y="19.700" fontSize="10" fontWeight="bold" textAnchor="middle" fill="#fff" fontFamily="Liberation Sans, sans-serif" textLength="26">STOP</text>
  </svg>
);

function LegendRow({ h, label, children }: { h: string; label: string; children: React.ReactNode }) {
  return (
    <div className={`flex items-center ${h}`}>
      <div className="flex w-[40px] justify-center pr-px">{children}</div>
      <span className="ml-[4px]">{label}</span>
    </div>
  );
}

function Legend() {
  return (
    <div className="flex w-[234px] shrink-0 flex-col border-l border-[#555] bg-[#d9d9d9] text-[14px]">
      <div className="ml-[19px] mt-[10px] h-[545px] w-[202px] border border-[#a6a6a6] pt-[228px]">
        <LegendRow h="h-[40px]" label="E-Stop Activ"><Stop /></LegendRow>
        <LegendRow h="h-[41px]" label="Place of E-Stop"><Stop faded /></LegendRow>
        <LegendRow h="h-[55px]" label="Zone Fault"><span className="size-[31px] border border-[#d9a9ab] bg-[#f3b1b3]" /></LegendRow>
        <LegendRow h="h-[35px]" label="Zone On"><span className="size-[31px] bg-white" /></LegendRow>
        <LegendRow h="h-[51px]" label="Zone Off"><span className="size-[31px] border border-[#dedaa8] bg-[#fdf8b2]" /></LegendRow>
        <LegendRow h="h-[27px]" label="Interlock Off"><span className="size-[17px] rounded-full border border-[#222] bg-[#45d62b]" /></LegendRow>
        <LegendRow h="h-[34px]" label="Enable Mode Selected">
          <svg className="size-[18px]" viewBox="0 0 18 18"><path d="M9 1L17 16.500H1z" fill="#ffee00" stroke="#333" /></svg>
        </LegendRow>
        <LegendRow h="h-[25px]" label="Interlock On"><span className="size-[17px] border border-[#222] bg-[#d90000]" /></LegendRow>
      </div>
      <div className="mb-[11px] ml-[27px] mt-auto flex flex-col gap-[15px]">
        <div className={`flex h-[26px] w-[182px] items-center justify-center ${buttonLook}`}>Show Place of Panels</div>
        <div className={`flex h-[26px] w-[182px] items-center justify-center ${buttonLook}`}>Show Place of E-Stops</div>
      </div>
    </div>
  );
}

/* ---------- bottom ---------- */

function AlarmLine() {
  const cell = "flex h-[24px] items-center overflow-hidden whitespace-nowrap border-r border-[#c0b8b0] pb-[2px] pl-[3px]";
  return (
    <div className="flex h-[30px] border-t border-black bg-white">
      <div className="relative ml-[2px] flex w-[58px] items-center justify-center border-l border-[#555] bg-linear-to-b from-[#ececec] to-[#d4d4d4] pr-[3px]">
        <Bolt /><Corner />
      </div>
      <div className="mt-[1px] flex h-[27px] w-[1858px] border border-[#8a8a70] bg-white text-[19px] leading-none text-white">
        <div className="flex h-[24px] w-full bg-[#ff0000]">
          <div className={`${cell} w-[108px] tracking-[0.2px]`}>2020-12-04</div>
          <div className={`${cell} w-[115px] tracking-[0.2px]`}>02:25:08</div>
          <div className={`${cell} w-[59px]`}>+</div>
          <div className={`${cell} w-[1002px] tracking-[-0.070px]`}>Mandrel drive Motor - Fault time feedback converter</div>
          <div className={`${cell} w-[132px]`}>DC2</div>
          <div className={`${cell} w-[131px] tracking-[-0.100px]`}>RE_MAD</div>
          <div className={`${cell} w-[131px]`}>10024051</div>
          <div className="flex w-[178px] items-center overflow-hidden whitespace-nowrap pb-[2px] pl-[3px]">R02RE001_MKL001</div>
        </div>
      </div>
    </div>
  );
}

const pages = ["Alarms", "Overview\nFloor RM", "Overview\nCellar RM", "Overview\nFloor FM", "Overview\nCellar FM", "Overview\nFloor DC", "Overview\nCellar DC", "Safety\nDetails"];

function ToolBar() {
  const tab = "flex h-full items-center justify-center border-r-2 border-black bg-linear-to-b from-[#5c5c5c] to-[#464646] shadow-[inset_1px_1px_0_#777] pr-px text-[18px]";
  const end = "flex h-full w-[59px] items-center justify-center border-l-2 border-black bg-linear-to-b from-[#606060] to-[#3c3c3c] shadow-[inset_1px_1px_0_#777]";
  return (
    <div className="flex h-[40px] border-y border-black bg-linear-to-b from-[#646464] to-[#323232] text-white">
      <div className={`${tab} w-[74px]`}>TF</div>
      <div className={`${tab} w-[74px]`}>RM</div>
      <div className={`${tab} w-[74px]`}>
        <svg className="h-[25px] w-[20px]" viewBox="0 0 20 25"><path d="M0 1h2V25H0zM3 2Q7-1 11 1.500T19.500 1.500V13Q16 15 11 12.500T3 13z" fill="#c4c4c4" /></svg>
      </div>
      <div className={`${tab} w-[74px]`}>DC</div>
      <div className={`${tab} w-[74px]`}>CC</div>
      <div className="h-full w-[4px] border-r-2 border-black bg-[#555]" />
      {pages.map((p) => (
        <div
          key={p}
          className={`flex h-full w-[128px] items-center justify-center whitespace-pre border-r border-black pr-px text-center text-[16px] leading-[18px] shadow-[inset_1px_0_0_#6a6a6a] ${p === "Overview\nFloor FM" ? "bg-linear-to-b from-[#1c1c1c] to-[#2c2c2c]" : ""}`}
        >
          {p}
        </div>
      ))}
      <div className="flex-1" />
      <div className={end}>
        <svg className="h-[24px] w-[34px]" viewBox="0 0 34 24">
          <path d="M1 1H26V16H1zM11 16h5v3h4v2H7v-2h4z" fill="#fff" />
          <path d="M3.500 3.500H23.500V13.500H3.500zM13.500 3V14M3 8.500H24" fill="none" stroke="#565656" strokeWidth="1.300" />
          <path d="M28 12.500h5.500l-2.700-3.500z" fill="#fff" />
        </svg>
      </div>
      <div className={end}>
        <svg className="h-[26px] w-[34px]" viewBox="0 0 34 26">
          <path d="M1 1H26V18H1zM9 18h7v2h2v2H7v-2h2z" fill="#fff" /><path d="M3.500 3.500h20v12h-20z" fill="#c6c6c6" stroke="#555" />
          <circle cx="22" cy="14.500" r="3.500" fill="#bbb" stroke="#222" strokeWidth="1.500" /><path d="M22.500 18.500v7M22 22.500h3" stroke="#fff" strokeWidth="1.500" />
          <path d="M28 13h5.500l-2.700-3.500z" fill="#fff" />
        </svg>
      </div>
      <div className={end}>
        <svg className="h-[20px] w-[25px]" viewBox="0 0 25 20">
          <path d="M0 4H2V2.500H8V4H10V0.500H20V4H25V20H0z" fill="#fff" /><circle cx="15" cy="11.500" r="4.700" fill="#fff" stroke="#4c4c4c" strokeWidth="2.500" /><path d="M3 5.500h4M12.500 2.500h5" stroke="#4c4c4c" strokeWidth="1.300" />
        </svg>
      </div>
      <div className={end}>
        <svg className="mr-[3px] h-[24px] w-[24px]" viewBox="0 0 24 24">
          <path d="M2 4.500H20V22H2z" fill="none" stroke="#fff" strokeWidth="3.200" />
          <path d="M6 11L10.500 17L22.500 1.500" fill="none" stroke="#4a4a4a" strokeWidth="6" />
          <path d="M5.500 10.500L10.500 16.500L23 1" fill="none" stroke="#fff" strokeWidth="3.200" />
        </svg>
      </div>
    </div>
  );
}

/* ---------- timer window ---------- */

const Check = ({ on = true }: { on?: boolean }) => (
  <svg className="size-[13px] shrink-0" viewBox="0 0 13 13">
    <rect x="0.500" y="0.500" width="12" height="12" fill="#fff" stroke="#333" />
    {on && <path d="M2.500 6.500L5 9.200L10.700 3.200" fill="none" stroke="#333" strokeWidth="1.200" />}
  </svg>
);

const tree = ["General", "Tunnel Furnace", "Roughing Mill", "Finishing Mill", "Laminar Cooling", "Down Coiler", "Coil Conveyor", "System"];

function TimerWindow() {
  return (
    <div className="absolute left-[1482px] top-[46px] flex h-[356px] w-[394px] flex-col border border-[#8f8f8f] bg-[#f0f0f0] text-[11px] leading-none text-black shadow-[0_4px_14px_rgba(0,0,0,0.45)]">
      <div className="flex h-[30px] shrink-0 items-center bg-white pl-[10px] text-[#999]">
        <svg className="h-[12px] w-[13px]" viewBox="0 0 13 12"><ellipse cx="6.500" cy="7" rx="6" ry="4.500" fill="#bfe3d6" /><circle cx="6.500" cy="6" r="4.500" fill="#49a9b0" /><path d="M4 2q4-3 6 2l-3 2z" fill="#d26a5c" /><path d="M3 6l3 4" stroke="#587" /></svg>
        <span className="ml-[6px] flex-1 font-['Open_Sans'] text-[12px] tracking-[0.100px]">WinCC Timer</span>
        <svg className="mr-[18px] h-[11px] w-[103px]" viewBox="0 0 103 11"><path d="M1 5.500h10M46.500 0.500h9v9h-9zM92.500 0.500l10 10M102.500 0.500l-10 10" fill="none" stroke="#8c8c8c" /></svg>
      </div>
      <div className="ml-[13px] mt-[12px] flex h-[21px] shrink-0 items-stretch">
        <div className="flex w-[53px] items-center justify-center border border-[#0078d7] bg-[#e5f1fb]">Time!</div>
        <div className="ml-[7px] flex w-[144px] items-center border border-[#666] bg-white pb-px pl-[2px] tracking-[-0.250px]">SDI_CSPM_1-1033.sql</div>
        <div className="ml-[7px] flex w-[73px] items-center justify-center border border-[#adadad] bg-[#e1e1e1] tracking-[-0.100px]">Recalculate</div>
        <div className="ml-[7px] flex w-[75px] items-center border border-[#666] bg-white pb-px pl-[1px] tracking-[-0.150px]">pdlrt_cspm_3</div>
      </div>
      <div className="ml-[12px] mt-[8px] h-[220px] w-[367px] shrink-0 border border-[#828790] bg-white pl-[9px] pt-px">
        {tree.map((t, i) => (
          <div key={t} className="flex h-[16px] items-center">
            <svg className="h-[16px] w-[14px]" viewBox="0 0 14 16">
              <path d={i === 0 ? "M4.500 13v3" : i === 7 ? "M4.500 0v4" : "M4.500 0v4M4.500 13v3"} stroke="#888" strokeDasharray="1 1" />
              <path d="M10 8.500h4" stroke="#888" strokeDasharray="1 1" />
              <rect x="0.500" y="4.500" width="8" height="8" fill="#fafafa" stroke="#919191" /><path d="M2.500 8.500h4M4.500 6.500v4" stroke="#3a50a0" />
            </svg>
            <Check />
            <span className="ml-[2px] tracking-[-0.350px]">{t}</span>
          </div>
        ))}
      </div>
      <div className="ml-[11px] mt-[6px] flex">
        <div className="h-[43px] w-[301px] border border-[#828790] bg-white" />
        <div className="ml-[5px] flex flex-col gap-[13px] pt-[1px] tracking-[-0.200px]">
          <div className="flex items-center gap-[6px]"><Check on={false} />Expand</div>
          <div className="flex items-center gap-[6px]"><Check />Select</div>
        </div>
      </div>
    </div>
  );
}

export default function App() {
  return (
    <div className="relative flex h-[1080px] w-[1920px] flex-col overflow-hidden bg-[#d9d9d9] font-['Liberation_Sans',Arial,sans-serif] text-black">
      <MenuBar />
      <div className="flex h-[89px] border-t border-white bg-linear-to-b from-[#d6d6d6] to-[#a9a9a9]">
        <Logo />
        <HeaderTable />
        <div className="ml-auto mr-[16px] flex flex-col items-end pt-[8px] text-[#333]">
          <span className="mr-[26px] text-[17px] leading-[22px]">Friday</span>
          <span className="mr-[5px] text-[17px] leading-[22px]">2020-12-04</span>
          <span className="mr-[3px] text-[21px] font-bold leading-[30px] text-black">02:25:48</span>
        </div>
      </div>
      <NavBar />
      <div className="flex h-[849px]">
        <LeftPanel />
        <div className="w-[5px] shrink-0 border-x border-black bg-[#cbcbcb]" />
        <div className="relative flex-1 overflow-hidden bg-[#e4e4e4]">
          <PlantDrawing />
          {zones.map((z) => <ZoneLabel key={z.id} z={z} />)}
        </div>
        <Legend />
      </div>
      <AlarmLine />
      <ToolBar />
      <TimerWindow />
    </div>
  );
}
